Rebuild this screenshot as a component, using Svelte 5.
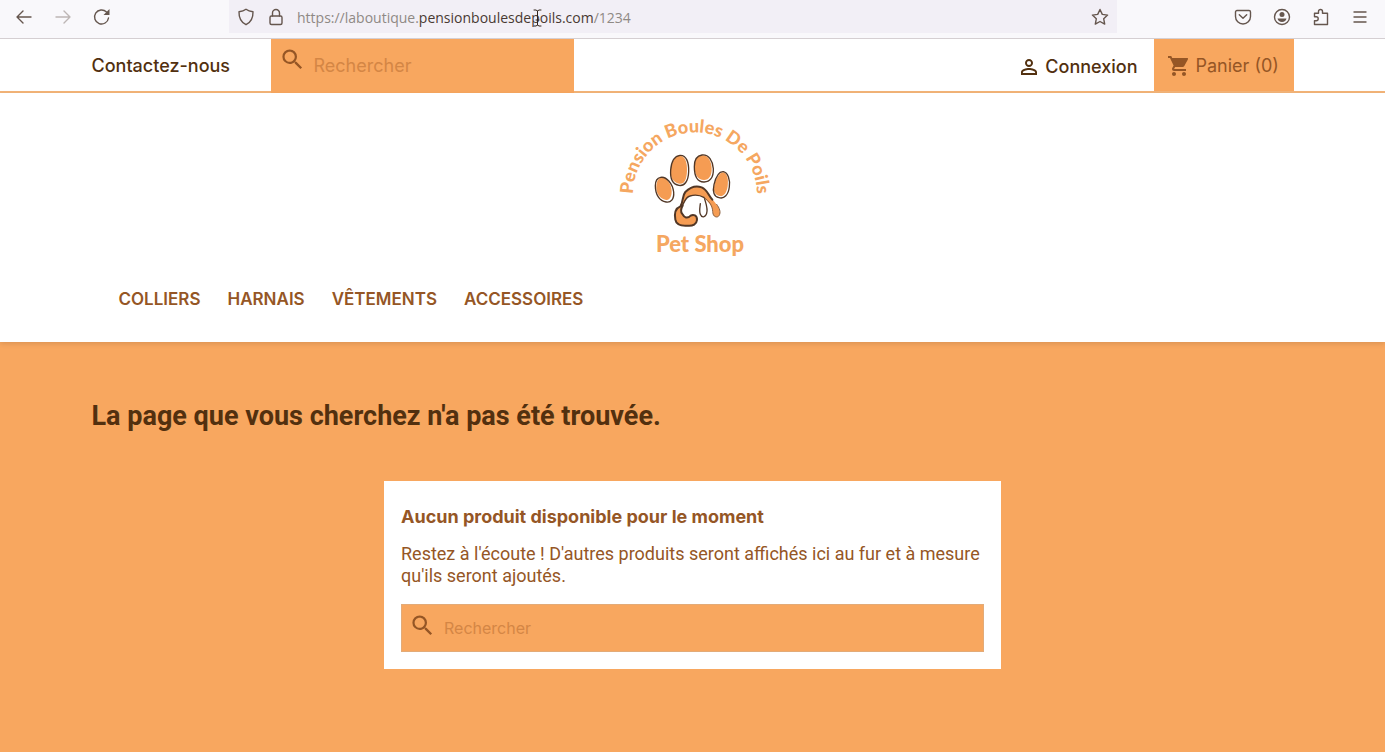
<script>
  const categories = ['Colliers', 'Harnais', 'Vêtements', 'Accessoires'];
  let headerQuery = $state('');
  let pageQuery = $state('');
</script>

{#snippet magnifier()}
  <svg class="magnifier" viewBox="0 0 24 24" aria-hidden="true">
    <path d="M15.5 14h-.79l-.28-.27A6.471 6.471 0 0 0 16 9.5 6.5 6.5 0 1 0 9.5 16c1.61 0 3.09-.59 4.23-1.57l.27.28v.79l5 4.99L20.49 19l-4.99-5zm-6 0C7.01 14 5 11.99 5 9.5S7.01 5 9.5 5 14 7.01 14 9.5 11.99 14 9.5 14z" />
  </svg>
{/snippet}

<div class="page">
  <div class="browser">
    <div class="history">
      <button aria-label="Reculer">
        <svg viewBox="0 0 18 18"><path d="M16 9H2M8 3 2 9l6 6" /></svg>
      </button>
      <button aria-label="Avancer" disabled>
        <svg viewBox="0 0 18 18"><path d="M2 9h14M10 3l6 6-6 6" /></svg>
      </button>
      <button aria-label="Actualiser">
        <svg viewBox="0 0 18 18"><path d="M15.5 10A7 7 0 1 1 13.5 4" /><path class="solid" d="M16.5 1v6h-6z" /></svg>
      </button>
    </div>
    <div class="address">
      <svg viewBox="0 0 18 18" aria-hidden="true"><path d="M9 1.3c2.2 1.7 4.2 2.2 7 2.4.2 6.3-2 10.5-7 13-5-2.500-7.200-6.700-7-13 2.800-.2 4.800-.7 7-2.400z" /></svg>
      <svg viewBox="0 0 18 18" aria-hidden="true"><rect x="3" y="8" width="12" height="8.500" rx="1.500" /><path d="M5.500 8V5a3.500 3.500 0 0 1 7 0v3" /></svg>
      <span class="url">https://laboutique.<b>pensionboulesdepoils.com</b>/1234<svg class="caret" viewBox="0 0 9 18" aria-hidden="true"><path d="M1 1h2l1.500 1L6 1h2M4.500 2v14M1 17h2l1.500-1L6 17h2M3 11h3" /></svg></span>
      <button aria-label="Marquer cette page">
        <svg viewBox="0 0 18 18"><path d="m9 1.500 2.300 4.900 5.300.7-3.900 3.700 1 5.300L9 13.500l-4.700 2.600 1-5.300-3.900-3.700 5.300-.7z" /></svg>
      </button>
    </div>
    <div class="tools">
      <button aria-label="Pocket">
        <svg viewBox="0 0 18 18"><path d="M3 2.500h12a1.500 1.500 0 0 1 1.500 1.500v4.500a7.500 7.500 0 0 1-15 0V4A1.500 1.500 0 0 1 3 2.500zM5.300 6.700 9 10.300l3.700-3.600" /></svg>
      </button>
      <button aria-label="Compte">
        <svg viewBox="0 0 18 18"><circle cx="9" cy="9" r="7.500" /><circle class="solid" cx="9" cy="6.500" r="2.500" /><path class="solid" d="M4.500 10.500h9c-.5 2.300-2 3.500-4.500 3.500s-4-1.200-4.500-3.500z" /></svg>
      </button>
      <button aria-label="Extensions">
        <svg viewBox="0 0 18 18"><path d="M2.500 16.500v-3.700h1.700a2 2 0 0 0 0-4H2.500V5.300h4V3.500a2 2 0 0 1 4 0v1.800h5v11.200z" /></svg>
      </button>
      <button aria-label="Menu">
        <svg viewBox="0 0 18 18"><path d="M3 4h12M3 9h12M3 14h12" /></svg>
      </button>
    </div>
  </div>

  <nav class="topbar">
    <div class="container">
      <a class="contact" href="#contact">Contactez-nous</a>
      <form class="search compact" role="search">
        {@render magnifier()}
        <input type="text" placeholder="Rechercher" aria-label="Rechercher" bind:value={headerQuery} />
      </form>
      <a class="login" href="#connexion">
        <svg viewBox="0 0 24 24" aria-hidden="true"><path d="M12 5.900a2.100 2.100 0 1 1 0 4.200 2.100 2.100 0 0 1 0-4.200m0 9c2.970 0 6.100 1.460 6.100 2.100v1.100H5.900V17c0-.64 3.130-2.100 6.100-2.100M12 4C9.790 4 8 5.790 8 8s1.790 4 4 4 4-1.790 4-4-1.790-4-4-4zm0 9c-2.670 0-8 1.340-8 4v3h16v-3c0-2.660-5.330-4-8-4z" /></svg>
        Connexion
      </a>
      <a class="cart" href="#panier">
        <svg viewBox="0 0 24 24" aria-hidden="true"><path d="M7 18c-1.100 0-1.990.9-1.990 2S5.900 22 7 22s2-.9 2-2-.9-2-2-2zM1 2v2h2l3.600 7.590-1.350 2.450c-.16.28-.25.61-.25.960 0 1.100.9 2 2 2h12v-2H7.420c-.14 0-.25-.11-.25-.25l.03-.12.900-1.630h7.450c.75 0 1.410-.41 1.750-1.030l3.580-6.490A1 1 0 0 0 20 4H5.210l-.94-2H1zm16 16c-1.100 0-1.990.9-1.990 2s.89 2 1.990 2 2-.9 2-2-.9-2-2-2z" /></svg>
        Panier (0)
      </a>
    </div>
  </nav>

  <header>
    <a class="brand" href="#accueil" aria-label="Accueil">
      <svg viewBox="0 0 190 165">
        <path id="arc" d="M34.500 103A62 62 0 1 1 155.500 103" fill="none" />
        <text class="ring" text-anchor="middle"><textPath href="#arc" startOffset="50%">Pension Boules De Poils</textPath></text>
        <g transform="translate(45 40) scale(.3333)">
          <g class="toes">
            <path d="M49 98C65 96 80 119 80 139C80 158 72 168 61 164C43 160 32 143 34 122C35 108 40 99 49 98Z" />
            <path d="M105 32C122 33 127 55 126 78C125 104 118 119 103 116C86 114 75 99 77 76C79 50 90 32 105 32Z" />
            <path d="M171 31C190 30 199 49 200 70C201 92 192 105 177 105C159 105 148 90 149 64C150 43 157 32 171 31Z" />
            <path d="M236 82C247 87 251 103 248 124C245 144 236 156 224 153C210 151 204 139 208 121C213 100 224 81 236 82Z" />
          </g>
          <g class="outline">
            <path d="M47 97C65 94 83 117 86 141C88 163 77 174 63 171C44 169 31 149 31 122C31 106 37 99 47 97Z" />
            <path d="M105 31C125 30 132 54 131 80C130 109 118 124 102 121C84 118 75 101 77 75C79 50 88 33 105 31Z" />
            <path d="M171 30C192 28 203 48 205 71C206 97 195 112 176 111C157 110 148 92 148 65C148 43 156 32 171 30Z" />
            <path d="M235 80C249 83 256 104 253 126C250 149 238 163 222 158C207 155 202 140 207 119C212 98 222 79 235 80Z" />
          </g>
          <path class="pad" d="M106 184C117 169 109 151 122 140C134 127 151 120 169 126C187 133 189 149 201 162C215 177 225 190 225 204C224 216 214 219 206 212C202 206 206 198 201 189C195 174 184 167 178 159C164 149 147 150 133 153C121 160 119 175 110 185C105 197 111 204 118 214C128 221 134 209 145 209C157 211 158 224 153 234C146 245 126 242 108 242C92 239 88 219 91 202C93 193 98 187 106 184Z" />
          <path class="outline strong" d="M202 164C189 149 187 134 170 127C150 120 134 128 121 141C110 154 116 170 106 184C91 190 88 207 91 224C94 242 110 243 127 242C144 244 155 237 156 225C157 211 145 207 137 212C127 222 118 218 112 207C106 199 108 190 113 182" />
          <path class="outline" d="M111 184C119 170 121 157 135 153C151 148 166 151 178 158C181 172 190 190 185 205C181 218 170 219 166 208C162 198 165 187 166 176" />
          <path class="outline thin" d="M178 158C193 169 202 181 203 199C203 216 217 220 222 212C229 202 223 188 215 178" />
        </g>
        <text class="shop" x="100" y="147" text-anchor="middle">Pet Shop</text>
      </svg>
    </a>
    <div class="container">
      <ul class="menu">
        {#each categories as name}
          <li><a href="#{name}">{name}</a></li>
        {/each}
      </ul>
    </div>
  </header>

  <main>
    <div class="container">
      <h1>La page que vous cherchez n'a pas été trouvée.</h1>
      <section class="notice">
        <h2>Aucun produit disponible pour le moment</h2>
        <p>Restez à l'écoute ! D'autres produits seront affichés ici au fur et à mesure qu'ils seront ajoutés.</p>
        <form class="search" role="search">
          {@render magnifier()}
          <input type="text" placeholder="Rechercher" aria-label="Rechercher un produit" bind:value={pageQuery} />
        </form>
      </section>
    </div>
  </main>
</div>

<style>
  :global(body) { margin: 0; }
  .page {
    --orange: #f8a75f;
    --brown: #955625;
    --dark: #52300f;
    min-height: 100vh;
    display: flex;
    flex-direction: column;
    font-family: Inter, "Liberation Sans", sans-serif;
    font-size: 18px;
    line-height: 22px;
    color: var(--brown);
    background: #fff;
  }
  .page * { box-sizing: border-box; }
  a { color: inherit; text-decoration: none; }
  button { display: flex; padding: 0; border: 0; background: none; color: inherit; }
  button:disabled { opacity: .4; }

  .browser {
    display: grid;
    grid-template-columns: 229px minmax(0, 888px) 1fr;
    height: 39px;
    padding-bottom: 5px;
    border-bottom: 1px solid #d5cfd2;
    background: #f9f8fb;
    color: #65564e;
  }
  .browser svg { width: 18px; height: 18px; fill: none; stroke: currentColor; stroke-width: 1.400; stroke-linejoin: round; stroke-linecap: round; }
  .browser .solid { fill: currentColor; stroke: none; }
  .history, .tools, .address { display: flex; align-items: center; }
  .history { gap: 21px; padding-left: 15px; }
  .address { gap: 12px; padding: 0 8px; background: #f2eff6; }
  .tools { justify-content: flex-end; gap: 21px; padding-right: 16px; }
  .url { position: relative; flex: 1; padding-top: 2px; font: 14px/20px "Open Sans", sans-serif; color: #8f8985; white-space: nowrap; }
  .url b { font-weight: 400; color: #493a33; }
  .browser .caret { position: absolute; left: 236px; top: 3px; width: 9px; height: 18px; color: #33251d; stroke-width: 1; }

  .container { width: 100%; max-width: 1232px; margin: 0 auto; padding: 0 15px; }
  .topbar { border-bottom: 2px solid #f3b478; }
  .topbar .container { display: flex; align-items: stretch; height: 52px; }
  .contact, .login { display: flex; align-items: center; color: var(--dark); font-weight: 500; }
  .contact { width: 179px; padding-top: 2px; }
  .login { gap: 4px; margin-left: auto; margin-right: 16px; padding-top: 4px; }
  .login svg, .cart svg { width: 24px; height: 24px; fill: currentColor; }
  .cart { display: flex; align-items: center; gap: 5px; width: 140px; padding: 2px 0 0 13px; background: var(--orange); }

  .search { display: flex; align-items: center; height: 48px; padding: 0 7px; border: 1px solid #e3ab78; background: var(--orange); }
  .search.compact { width: 303px; height: 54px; margin-bottom: -2px; border: 0; padding: 0 8px; }
  .magnifier { flex: none; width: 27px; height: 27px; margin-bottom: 5px; fill: var(--brown); }
  .compact .magnifier { margin-bottom: 14px; }
  .search input { flex: 1; min-width: 0; padding: 0 8px; border: 0; outline: 0; background: none; font: inherit; font-size: 16px; color: var(--dark); }
  .search.compact input { font-size: 18px; }
  .search input::placeholder { color: #d48645; opacity: 1; }

  header { position: relative; padding-top: 12px; box-shadow: 0 2px 5px rgba(0, 0, 0, .11); }
  .brand { display: block; width: 190px; margin: 0 auto; padding-left: 2px; }
  .brand svg { display: block; width: 190px; height: 165px; }
  .ring { font: 900 18px Lato, sans-serif; fill: #f5a761; }
  .shop { font: 900 22px Lato, sans-serif; fill: #f5a761; }
  .toes { fill: #f59c53; }
  .outline { fill: none; stroke: #513726; stroke-width: 4; stroke-linecap: round; stroke-linejoin: round; }
  .strong { stroke-width: 6; }
  .thin { stroke: #8a6142; stroke-width: 3; }
  .pad { fill: #f59c53; }
  .menu { display: flex; flex-wrap: wrap; gap: 27px; margin: 0; padding: 18px 27px 32px; list-style: none; font-size: 17px; font-weight: 600; text-transform: uppercase; }

  main { flex: 1; padding: 58px 0; background: var(--orange); }
  h1 { margin: 0 0 49px; font-family: Roboto, sans-serif; font-size: 27px; line-height: 32px; font-weight: 700; color: var(--dark); }
  .notice { max-width: 617px; margin: 0 auto; padding: 25px 17px 17px; background: #fff; }
  h2 { margin: 0 0 15px; font-size: 18px; line-height: 22px; font-weight: 700; }
  p { margin: 0 0 17px; font-family: Roboto, sans-serif; }
</style>
